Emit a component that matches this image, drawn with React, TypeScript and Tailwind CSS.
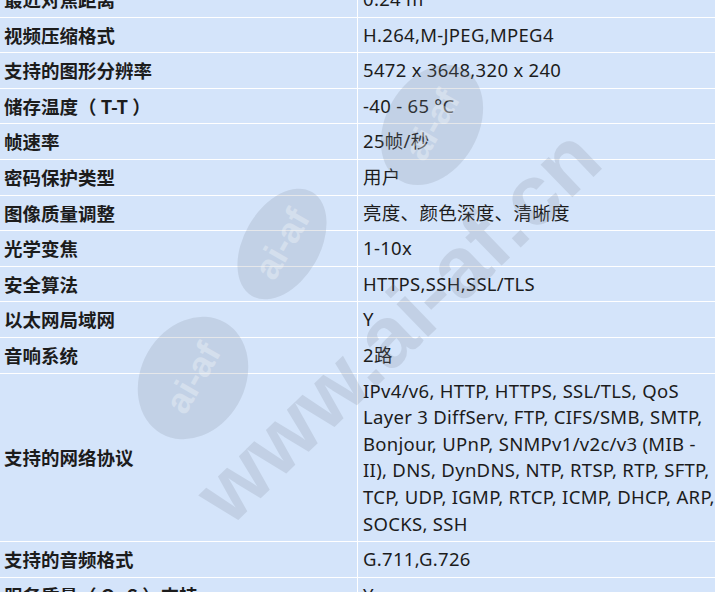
const specs: [string, string | string[]][] = [
  ["最近对焦距离", "0.24 m"],
  ["视频压缩格式", "H.264,M-JPEG,MPEG4"],
  ["支持的图形分辨率", "5472 x 3648,320 x 240"],
  ["储存温度（ T-T ）", "-40 - 65 °C"],
  ["帧速率", "25帧/秒"],
  ["密码保护类型", "用户"],
  ["图像质量调整", "亮度、颜色深度、清晰度"],
  ["光学变焦", "1-10x"],
  ["安全算法", "HTTPS,SSH,SSL/TLS"],
  ["以太网局域网", "Y"],
  ["音响系统", "2路"],
  [
    "支持的网络协议",
    [
      "IPv4/v6, HTTP, HTTPS, SSL/TLS, QoS",
      "Layer 3 DiffServ, FTP, CIFS/SMB, SMTP,",
      "Bonjour, UPnP, SNMPv1/v2c/v3 (MIB -",
      "II), DNS, DynDNS, NTP, RTSP, RTP, SFTP,",
      "TCP, UDP, IGMP, RTCP, ICMP, DHCP, ARP,",
      "SOCKS, SSH",
    ],
  ],
  ["支持的音频格式", "G.711,G.726"],
  ["服务质量（ QoS ）支持", "Y"],
];

// faint site watermark laid over the table
function Watermark() {
  const logos = [
    { cx: 432, cy: 125, rx: 64, ry: 46 },
    { cx: 282, cy: 244, rx: 60, ry: 38 },
    { cx: 193, cy: 378, rx: 64, ry: 52 },
  ];
  return (
    <svg
      className="pointer-events-none absolute inset-0 h-full w-full"
      viewBox="0 0 715 592"
      preserveAspectRatio="none"
    >
      {logos.map((l, i) => (
        <g key={i} transform={`rotate(-60 ${l.cx} ${l.cy})`}>
          <ellipse cx={l.cx} cy={l.cy} rx={l.rx} ry={l.ry} fill="#7d8594" opacity="0.2" />
          <text
            x={l.cx}
            y={l.cy + 12}
            textAnchor="middle"
            fontFamily="Liberation Sans, sans-serif"
            fontWeight="700"
            fontSize="36"
            fill="#ffffff"
            opacity="0.3"
          >
            ai-af
          </text>
        </g>
      ))}
      <text
        transform="rotate(-44 230 528)"
        x="230"
        y="528"
        fontFamily="Liberation Sans, sans-serif"
        fontWeight="700"
        fontSize="86"
        fill="#7d8594"
        opacity="0.2"
      >
        www.ai-af.cn
      </text>
    </svg>
  );
}

export default function App() {
  return (
    <div
      className="relative h-[592px] overflow-hidden bg-[#d4e4fa] text-[18.5px] text-[#1c1c1c]"
      style={{ fontFamily: '"Noto Sans", "Noto Sans CJK SC", sans-serif' }}
    >
      <div className="-mt-[18px]">
        {specs.map(([label, value]) => (
          <div key={label} className="grid grid-cols-[358px_1fr] border-b border-white">
            <div
              className="flex items-center whitespace-pre border-r border-white py-[4px] pl-[4px] font-bold leading-[26.6px]"
              style={{ fontFamily: '"Noto Sans CJK SC", sans-serif' }}
            >
              {label}
            </div>
            <div className="py-[4px] pl-[5px] leading-[26.6px] tracking-[0.3px] whitespace-nowrap">
              {Array.isArray(value)
                ? value.map((line) => <div key={line}>{line}</div>)
                : value}
            </div>
          </div>
        ))}
      </div>
      <Watermark />
    </div>
  );
}
